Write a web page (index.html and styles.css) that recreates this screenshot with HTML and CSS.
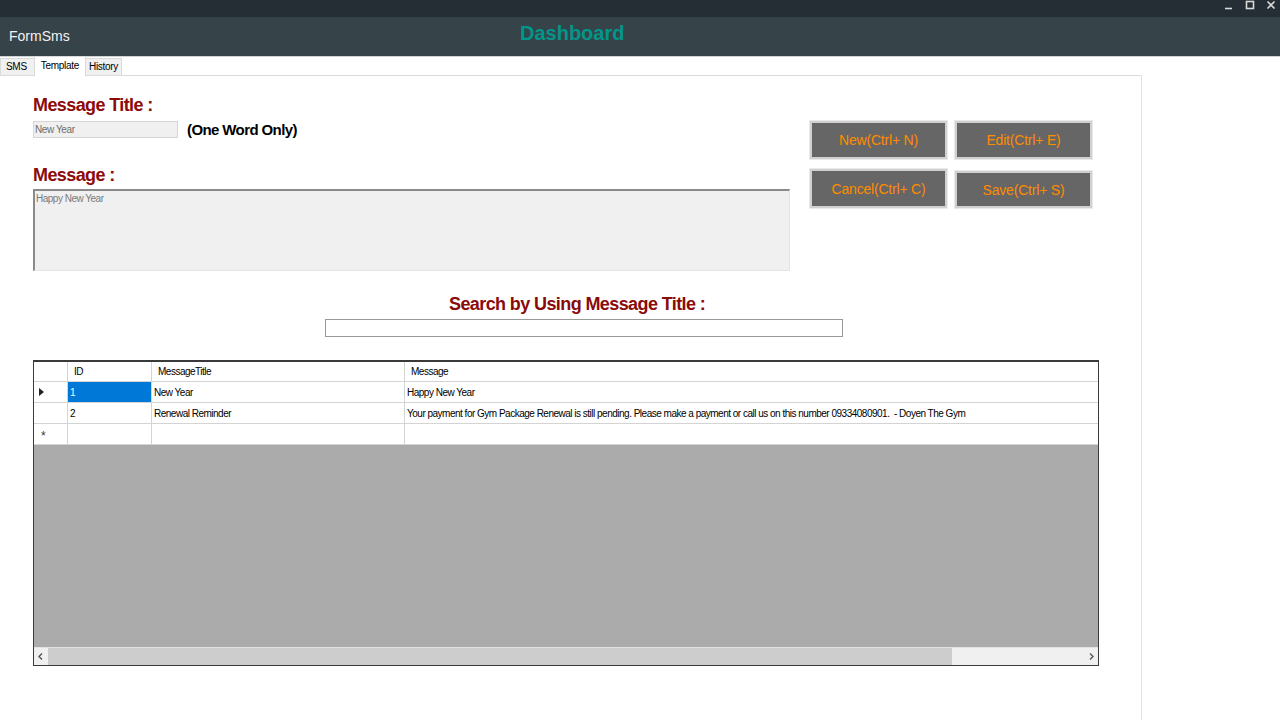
FILE: index.html
```html
<!DOCTYPE html>
<html lang="en">
<head>
    <meta charset="UTF-8">
    <title>FormSms - Dashboard</title>
    <link rel="stylesheet" href="styles.css">
</head>
<body>
    <!-- Window title bar -->
    <div class="titlebar">
        <div class="win-controls">
            <svg width="10" height="10" viewBox="0 0 10 10"><path d="M1 8.5h7" stroke="#d8d8d8" stroke-width="1.6"/></svg>
            <svg width="10" height="10" viewBox="0 0 10 10"><rect x="1.5" y="1.5" width="7" height="7" fill="none" stroke="#d8d8d8" stroke-width="1.6"/></svg>
            <svg width="10" height="10" viewBox="0 0 10 10"><path d="M1.5 1.5l7 7M8.5 1.5l-7 7" stroke="#d8d8d8" stroke-width="1.6"/></svg>
        </div>
    </div>

    <header class="appbar">
        <div class="brand">FormSms</div>
        <div class="app-title">Dashboard</div>
    </header>

    <div class="tabs">
        <div class="tab sms">SMS</div>
        <div class="tab active">Template</div>
        <div class="tab">History</div>
    </div>

    <div class="tab-page">
        <div class="top">
            <div class="form">
                <div class="label first">Message Title :</div>
                <div class="title-row">
                    <div class="input title-input">New Year</div>
                    <span class="hint">(One Word Only)</span>
                </div>
                <div class="label msg-label">Message :</div>
                <div class="textarea">Happy New Year</div>
            </div>

            <div class="buttons">
                <button class="btn">New(Ctrl+ N)</button>
                <button class="btn">Edit(Ctrl+ E)</button>
                <button class="btn">Cancel(Ctrl+ C)</button>
                <button class="btn save">Save(Ctrl+ S)</button>
            </div>
        </div>

        <div class="label search-label">Search by Using Message Title :</div>
        <div class="search-input"></div>

        <!-- Data grid -->
        <div class="grid">
            <div class="grid-rows">
                <div class="row head">
                    <div class="cell rh"></div>
                    <div class="cell">ID</div>
                    <div class="cell">MessageTitle</div>
                    <div class="cell">Message</div>
                </div>
                <div class="row">
                    <div class="cell rh"><span class="arrow"></span></div>
                    <div class="cell selected">1</div>
                    <div class="cell">New Year</div>
                    <div class="cell">Happy New Year</div>
                </div>
                <div class="row">
                    <div class="cell rh"></div>
                    <div class="cell">2</div>
                    <div class="cell">Renewal Reminder</div>
                    <div class="cell">Your payment for Gym Package Renewal is still pending. Please make a payment or call us on this number 09334080901.&nbsp; - Doyen The Gym</div>
                </div>
                <div class="row">
                    <div class="cell rh"><span class="star">*</span></div>
                    <div class="cell"></div>
                    <div class="cell"></div>
                    <div class="cell"></div>
                </div>
            </div>
            <div class="grid-empty"></div>
            <div class="hscroll">
                <svg width="14" height="17" viewBox="0 0 14 17"><path d="M8 5.5l-3 3 3 3" fill="none" stroke="#555" stroke-width="1.4"/></svg>
                <div class="track"><div class="thumb"></div></div>
                <svg width="14" height="17" viewBox="0 0 14 17"><path d="M6 5.5l3 3-3 3" fill="none" stroke="#555" stroke-width="1.4"/></svg>
            </div>
        </div>
    </div>
</body>
</html>
```

FILE: styles.css
```css
body {
    margin: 0;
    font-family: "Liberation Sans", Arial, sans-serif;
    background: #fff;
    color: #000;
    overflow: hidden;
}
.titlebar {
    height: 17px;
    background: #252e34;
    display: flex;
    justify-content: flex-end;
}
.win-controls {
    display: flex;
    gap: 11px;
    padding: 0 4px 0 0;
    align-items: flex-start;
}
.appbar {
    height: 39px;
    background: #364349;
    display: flex;
    align-items: center;
    border-bottom: 1px solid #cfd3d5;
}
.brand {
    width: 520px;
    padding-left: 9px;
    box-sizing: border-box;
    color: #f2f2f2;
    font-size: 14px;
    padding-bottom: 1px;
}
.app-title {
    color: #00968a;
    font-size: 20px;
    font-weight: bold;
    padding-bottom: 6px;
}
.tabs {
    display: flex;
    width: 1142px;
    height: 19px;
    align-items: flex-end;
    box-sizing: border-box;
    border-bottom: 1px solid #dadada;
    font-size: 10px;
    letter-spacing: -0.3px;
}
.tab {
    height: 16px;
    line-height: 16px;
    padding: 0 3px;
    background: #f0f0f0;
    border: 1px solid #dadada;
    border-bottom: none;
    margin-right: -1px;
}
.tab.sms {
    padding: 0 7px 0 5px;
}
.tab.active {
    height: 19px;
    line-height: 17px;
    background: #fff;
    padding: 0 6px;
    position: relative;
    top: 1px;
}
.tab-page {
    width: 1142px;
    height: 644px;
    border-right: 1px solid #e2e2e2;
    padding-left: 33px;
    box-sizing: border-box;
}
.top {
    display: flex;
}
.form {
    width: 777px;
}
.label {
    color: #8b0a0a;
    font-weight: bold;
    font-size: 18px;
    line-height: 20px;
    letter-spacing: -0.6px;
}
.label.first {
    padding-top: 19px;
}
.title-row {
    display: flex;
    align-items: center;
    margin-top: 6px;
}
.input {
    box-sizing: border-box;
    height: 17px;
    background: #f0f0f0;
    border: 1px solid #d6d6d6;
    color: #6d6d6d;
    font-size: 10px;
    letter-spacing: -0.4px;
    line-height: 15px;
    padding-left: 1px;
}
.title-input {
    width: 145px;
}
.hint {
    margin-left: 9px;
    font-weight: bold;
    font-size: 15px;
    letter-spacing: -0.6px;
}
.msg-label {
    margin-top: 27px;
}
.textarea {
    margin-top: 4px;
    width: 757px;
    height: 82px;
    box-sizing: border-box;
    background: #f0f0f0;
    border-top: 2px solid #8a8a8a;
    border-left: 2px solid #8a8a8a;
    border-right: 1px solid #e4e4e4;
    border-bottom: 1px solid #e4e4e4;
    color: #7a7a7a;
    font-size: 10px;
    letter-spacing: -0.5px;
    padding: 2px 0 0 1px;
}
.buttons {
    display: grid;
    grid-template-columns: 137px 137px;
    grid-template-rows: 38px 39px;
    column-gap: 8px;
    row-gap: 10px;
    margin-top: 45px;
}
.btn {
    background: #666;
    border: 2px solid #d0d0d0;
    outline: 1px solid #eaeaea;
    color: #ff8c00;
    font-family: "Liberation Sans", Arial, sans-serif;
    font-size: 14px;
    letter-spacing: -0.2px;
    padding: 0;
    cursor: pointer;
}
.btn.save {
    margin-top: 2px;
}
.search-label {
    margin-top: 23px;
    padding-left: 416px;
}
.search-input {
    margin: 5px 0 0 292px;
    width: 518px;
    height: 18px;
    box-sizing: border-box;
    border: 1px solid #999;
    background: #fff;
}
.grid {
    margin-top: 23px;
    width: 1066px;
    height: 306px;
    box-sizing: border-box;
    border: 1px solid #3a3a3a;
    border-top-width: 2px;
    display: flex;
    flex-direction: column;
    font-size: 10px;
    letter-spacing: -0.5px;
}
.row {
    display: grid;
    grid-template-columns: 33px 84px 253px 1fr;
    height: 21px;
    border-bottom: 1px solid #d4d4d4;
    box-sizing: border-box;
}
.row.head {
    height: 20px;
}
.cell {
    border-left: 1px solid #d4d4d4;
    padding-left: 2px;
    line-height: 21px;
    white-space: nowrap;
    overflow: hidden;
}
.head .cell {
    padding-left: 6px;
    line-height: 20px;
}
.cell.rh {
    border-left: none;
    padding-left: 0;
    position: relative;
}
.cell.selected {
    background: #0078d7;
    color: #fff;
}
.arrow {
    position: absolute;
    left: 5px;
    top: 6px;
    border-left: 5px solid #222;
    border-top: 4px solid transparent;
    border-bottom: 4px solid transparent;
}
.star {
    position: absolute;
    left: 7px;
    top: 2px;
    font-size: 12px;
    color: #333;
}
.grid-empty {
    flex: 1;
    background: #ababab;
}
.hscroll {
    height: 17px;
    display: flex;
    background: #f0f0f0;
    border-top: 1px solid #e2e2e2;
}
.track {
    flex: 1;
}
.thumb {
    width: 904px;
    height: 100%;
    background: #cdcdcd;
}
```
